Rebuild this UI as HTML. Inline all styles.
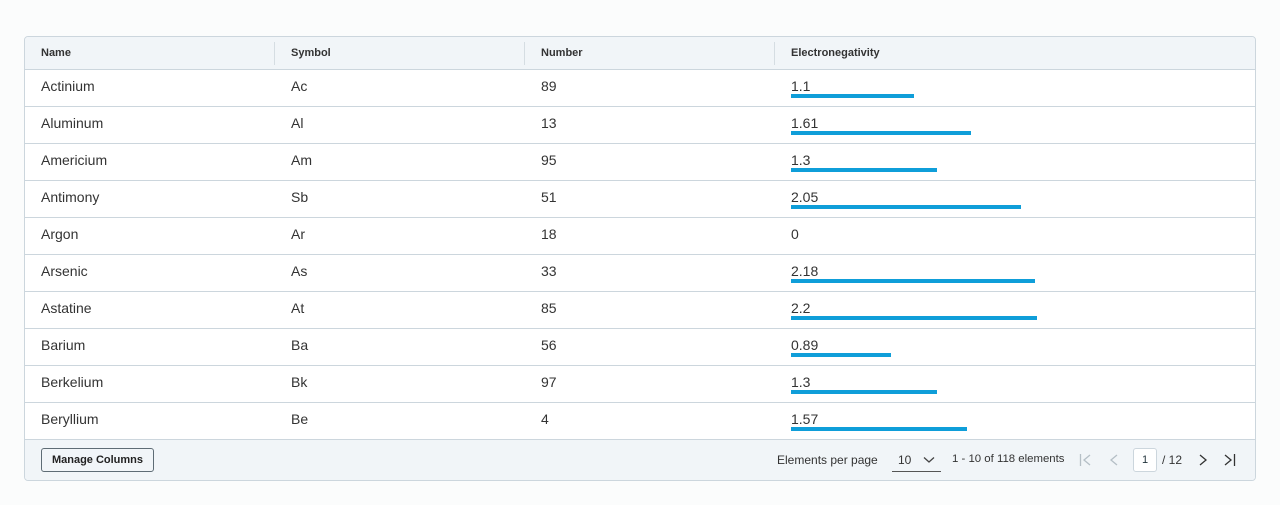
<!DOCTYPE html>
<html><head><style>
*{box-sizing:border-box;margin:0;padding:0}
body{width:1280px;height:505px;background:#fbfcfc;font-family:"Liberation Sans",sans-serif;color:#21333b;position:relative;overflow:hidden}
.box{position:absolute;left:24px;top:36px;width:1232px;height:445px;border:1px solid #ccd6dd;border-radius:4px;background:#fff;overflow:hidden}
.hd{position:absolute;left:0;top:0;width:100%;height:33px;background:#f1f5f8;border-bottom:1px solid #ccd6dd}
.hc{position:absolute;top:0;height:32px;line-height:32px;font-size:11px;font-weight:bold;color:#333}
.sep{position:absolute;top:5px;width:1px;height:23px;background:#d5dde2}
.row{position:absolute;left:0;width:100%;height:37px;border-bottom:1px solid #ccd6dd}
.c{position:absolute;top:0;line-height:32px;font-size:14px;color:#333}
.bar{position:absolute;top:24px;height:4px;background:#0f9ed9}
.ft{position:absolute;left:0;top:403px;width:100%;height:41px;background:#f1f5f8}
.btn{position:absolute;left:16px;top:8px;width:113px;height:24px;border:1px solid #5e6c75;border-radius:3px;font-size:11px;font-weight:bold;line-height:22px;text-align:center;color:#222}
.ft span{position:absolute;font-size:12px;color:#333;top:13px}
</style></head><body>
<div class="box">
<div class="hd">
<div class="hc" style="left:16px">Name</div>
<div class="sep" style="left:249px"></div><div class="hc" style="left:266px">Symbol</div>
<div class="sep" style="left:499px"></div><div class="hc" style="left:516px">Number</div>
<div class="sep" style="left:749px"></div><div class="hc" style="left:766px">Electronegativity</div>
</div>
<div class="row" style="top:33px"><div class="c" style="left:16px">Actinium</div><div class="c" style="left:266px">Ac</div><div class="c" style="left:516px">89</div><div class="c" style="left:766px">1.1</div><div class="bar" style="left:766px;width:123px"></div></div>
<div class="row" style="top:70px"><div class="c" style="left:16px">Aluminum</div><div class="c" style="left:266px">Al</div><div class="c" style="left:516px">13</div><div class="c" style="left:766px">1.61</div><div class="bar" style="left:766px;width:180px"></div></div>
<div class="row" style="top:107px"><div class="c" style="left:16px">Americium</div><div class="c" style="left:266px">Am</div><div class="c" style="left:516px">95</div><div class="c" style="left:766px">1.3</div><div class="bar" style="left:766px;width:146px"></div></div>
<div class="row" style="top:144px"><div class="c" style="left:16px">Antimony</div><div class="c" style="left:266px">Sb</div><div class="c" style="left:516px">51</div><div class="c" style="left:766px">2.05</div><div class="bar" style="left:766px;width:230px"></div></div>
<div class="row" style="top:181px"><div class="c" style="left:16px">Argon</div><div class="c" style="left:266px">Ar</div><div class="c" style="left:516px">18</div><div class="c" style="left:766px">0</div></div>
<div class="row" style="top:218px"><div class="c" style="left:16px">Arsenic</div><div class="c" style="left:266px">As</div><div class="c" style="left:516px">33</div><div class="c" style="left:766px">2.18</div><div class="bar" style="left:766px;width:244px"></div></div>
<div class="row" style="top:255px"><div class="c" style="left:16px">Astatine</div><div class="c" style="left:266px">At</div><div class="c" style="left:516px">85</div><div class="c" style="left:766px">2.2</div><div class="bar" style="left:766px;width:246px"></div></div>
<div class="row" style="top:292px"><div class="c" style="left:16px">Barium</div><div class="c" style="left:266px">Ba</div><div class="c" style="left:516px">56</div><div class="c" style="left:766px">0.89</div><div class="bar" style="left:766px;width:100px"></div></div>
<div class="row" style="top:329px"><div class="c" style="left:16px">Berkelium</div><div class="c" style="left:266px">Bk</div><div class="c" style="left:516px">97</div><div class="c" style="left:766px">1.3</div><div class="bar" style="left:766px;width:146px"></div></div>
<div class="row" style="top:366px"><div class="c" style="left:16px">Beryllium</div><div class="c" style="left:266px">Be</div><div class="c" style="left:516px">4</div><div class="c" style="left:766px">1.57</div><div class="bar" style="left:766px;width:176px"></div></div>
<div class="ft">
<div class="btn">Manage Columns</div>
<span style="left:752px">Elements per page</span>
<span style="left:873px">10</span>
<svg style="position:absolute;left:898px;top:16px" width="12" height="8"><path d="M1 1.5l5 4.5 5-4.5" fill="none" stroke="#444" stroke-width="1.3"/></svg>
<div style="position:absolute;left:867px;top:31px;width:49px;height:1px;background:#555"></div>
<span style="left:927px;font-size:11.4px">1 - 10 of 118 elements</span>
<svg style="position:absolute;left:1054px;top:13px" width="14" height="14"><path d="M1.5 1v12M11 2L5 7l6 5" fill="none" stroke="#b5bfc6" stroke-width="1.3"/></svg>
<svg style="position:absolute;left:1083px;top:13px" width="12" height="14"><path d="M9 2L3 7l6 5" fill="none" stroke="#b5bfc6" stroke-width="1.3"/></svg>
<div style="position:absolute;left:1108px;top:8px;width:24px;height:24px;border:1px solid #ccd6dd;border-radius:3px;background:#fff;font-size:11px;line-height:22px;text-align:center">1</div>
<span style="left:1137px">/ 12</span>
<svg style="position:absolute;left:1172px;top:13px" width="12" height="14"><path d="M3 2l6 5-6 5" fill="none" stroke="#333" stroke-width="1.3"/></svg>
<svg style="position:absolute;left:1198px;top:13px" width="14" height="14"><path d="M2 2l6 5-6 5M11.5 1v12" fill="none" stroke="#333" stroke-width="1.3"/></svg>
</div>
</div>
</body></html>
